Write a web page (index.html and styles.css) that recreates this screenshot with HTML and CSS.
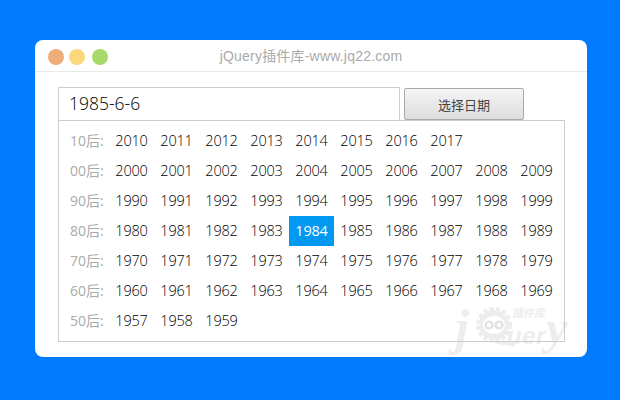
FILE: index.html
```html
<!DOCTYPE html>
<html lang="zh">
<head>
<meta charset="utf-8">
<title>jQuery插件库</title>
<link rel="stylesheet" href="styles.css">
</head>
<body>
<main class="window">
  <header class="titlebar">
    <div class="lights"><i class="light red"></i><i class="light yellow"></i><i class="light green"></i></div>
    <div class="title">jQuery插件库-www.jq22.com</div>
  </header>
  <div class="mark" aria-hidden="true">
    <span class="mark-j">j</span>
    <svg class="mark-q" width="44" height="42" viewBox="0 0 44 42"><circle cx="21" cy="19" r="15" fill="#ededed" stroke="#ededed" stroke-width="6" stroke-dasharray="4 2"/><path d="M22 36l20 3" fill="none" stroke="#ededed" stroke-width="3"/><ellipse cx="21" cy="19" rx="11" ry="9" fill="#fff"/><circle cx="16" cy="19" r="3.4" fill="none" stroke="#e2e2e2" stroke-width="2.4"/><circle cx="26" cy="19" r="3.4" fill="none" stroke="#e2e2e2" stroke-width="2.4"/></svg>
    <span class="mark-uer">uer</span>
    <span class="mark-y">y</span>
    <span class="mark-cn">插件库</span>
  </div>
  <section class="content">
    <div class="field">
      <div class="input">1985-6-6</div>
      <button class="btn">选择日期</button>
    </div>
    <div class="panel">
      <div class="row"><span class="label">10后:</span><span class="y">2010</span><span class="y">2011</span><span class="y">2012</span><span class="y">2013</span><span class="y">2014</span><span class="y">2015</span><span class="y">2016</span><span class="y">2017</span></div>
      <div class="row"><span class="label">00后:</span><span class="y">2000</span><span class="y">2001</span><span class="y">2002</span><span class="y">2003</span><span class="y">2004</span><span class="y">2005</span><span class="y">2006</span><span class="y">2007</span><span class="y">2008</span><span class="y">2009</span></div>
      <div class="row"><span class="label">90后:</span><span class="y">1990</span><span class="y">1991</span><span class="y">1992</span><span class="y">1993</span><span class="y">1994</span><span class="y">1995</span><span class="y">1996</span><span class="y">1997</span><span class="y">1998</span><span class="y">1999</span></div>
      <div class="row"><span class="label">80后:</span><span class="y">1980</span><span class="y">1981</span><span class="y">1982</span><span class="y">1983</span><span class="y on">1984</span><span class="y">1985</span><span class="y">1986</span><span class="y">1987</span><span class="y">1988</span><span class="y">1989</span></div>
      <div class="row"><span class="label">70后:</span><span class="y">1970</span><span class="y">1971</span><span class="y">1972</span><span class="y">1973</span><span class="y">1974</span><span class="y">1975</span><span class="y">1976</span><span class="y">1977</span><span class="y">1978</span><span class="y">1979</span></div>
      <div class="row"><span class="label">60后:</span><span class="y">1960</span><span class="y">1961</span><span class="y">1962</span><span class="y">1963</span><span class="y">1964</span><span class="y">1965</span><span class="y">1966</span><span class="y">1967</span><span class="y">1968</span><span class="y">1969</span></div>
      <div class="row"><span class="label">50后:</span><span class="y">1957</span><span class="y">1958</span><span class="y">1959</span></div>
    </div>
  </section>
</main>
</body>
</html>
```
FILE: styles.css
```css
* { box-sizing: border-box; }
html, body { margin: 0; height: 100%; }
body {
  background: #007aff;
  padding: 40px 33px 43px 35px;
  font-family: "Open Sans", "Noto Sans CJK SC", sans-serif;
  overflow: hidden;
}
.window {
  position: relative;
  height: 317px;
  background: #fff;
  border-radius: 8px;
  overflow: hidden;
}
.titlebar {
  position: relative;
  display: flex;
  align-items: center;
  justify-content: center;
  height: 32px;
  border-bottom: 1px solid #e8e8e8;
}
.lights {
  position: absolute;
  left: 13px;
  top: 9px;
  display: flex;
}
.light { width: 16px; height: 16px; border-radius: 50%; }
.red { background: #eeae77; }
.yellow { background: #fbd87c; margin-left: 5px; }
.green { background: #a8d96b; margin-left: 7px; }
.title {
  padding-top: 1px;
  font: 14px/30px "Liberation Sans", "Noto Sans CJK SC", sans-serif;
  color: #aaa;
  letter-spacing: 0.2px;
}
.content { position: relative; padding: 15px 0 0 23px; }
.field { display: flex; height: 33px; }
.input {
  width: 342px;
  height: 34px;
  border: 1px solid #ccc;
  padding-left: 10px;
  font-size: 17.5px;
  font-weight: 300;
  line-height: 30px;
  color: #000;
}
.btn {
  width: 120px;
  height: 32px;
  margin: 1px 0 0 4px;
  padding: 0;
  border: 1px solid #aaa;
  border-radius: 2px;
  background: linear-gradient(#f5f5f5, #dcdcdc);
  font: 13px "Noto Sans CJK SC", sans-serif;
  color: #444;
}
.panel {
  position: relative;
  width: 507px;
  height: 222px;
  border: 1px solid #ccc;
  padding: 5px 0 0 11px;
}
.row { display: flex; height: 30px; line-height: 30px; font-size: 14.5px; font-weight: 300; color: #000; }
.label { width: 39px; font-size: 14px; font-weight: 400; color: #aaa; }
.y { width: 45px; text-align: center; letter-spacing: -0.2px; }
.on { background: #0099f2; color: #fff; font-weight: 400; }
.mark {
  position: absolute;
  left: 411px;
  top: 266px;
  width: 140px;
  height: 50px;
  color: #ededed;
}
.mark-j, .mark-y {
  position: absolute;
  font: italic 700 50px/36px "Liberation Serif", serif;
}
.mark-j { left: 9px; top: 3px; }
.mark-y { left: 100px; top: 4px; font-size: 48px; }
.mark-q { position: absolute; left: 27px; top: 0; }
.mark-uer { position: absolute; left: 61px; top: 20px; font: italic 700 24px/20px "Liberation Sans", sans-serif; letter-spacing: 0.5px; }
.mark-cn { position: absolute; left: 66px; top: 0; font: italic 700 11px/12px "Noto Sans CJK SC", sans-serif; }
```
